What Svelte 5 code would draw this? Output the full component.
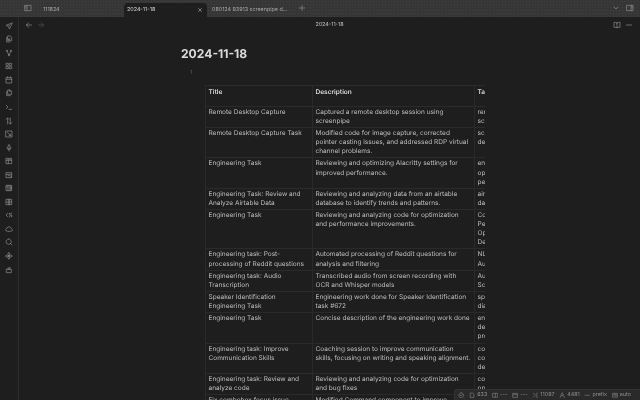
<script>
  // sidebar ribbon icons, top to bottom
  const ribbon = [
    "M21 3 3 10l7 3 3 7zM10 13l5-5",
    "M9 3h7l4 4v10H9zM5 7v14h10M14 11a2.500 2.500 0 1 0 1 2",
    "M6 4a2 2 0 1 0 .01 0M18 4a2 2 0 1 0 .01 0M12 17a2 2 0 1 0 .01 0M7 8l4 9M17 8l-4 9",
    "M4 4h6v6H4zM14 4h6v6h-6zM4 14h6v6H4zM14 14h6v6h-6z",
    "M4 5h16v16H4zM4 10h16M8 2v4M16 2v4",
    "M9 3h7l4 4v9H9zM5 8v12h11M13 3v4h4",
    "M4 7l5 5-5 5M12 19h8",
    "M8 3v18M4 7l4-4 4 4M16 21V3M12 17l4 4 4-4",
    "M3 3h18v18H3zM7 7l10 10M12 17h5v-5",
    "M12 3a3 3 0 0 1 3 3v6a3 3 0 0 1-6 0V6a3 3 0 0 1 3-3zM6 11a6 6 0 0 0 12 0M12 18v3",
    "M4 4h16v16H4zM4 10h16M10 10v10M8 7h8",
    "M4 5h16v15H4zM4 10h16M9 14h6M15 20l4-4",
    "M4 4h16v16H4zM9 4v16M15 4v16M4 9h5M15 9h5M15 14h5",
    "M4 4h16v16H4zM10 4v16M14 4v16M4 12h16",
    "M8 7l-5 5 5 5M20 6 13 18M14 7a1.500 1.500 0 1 0 .01 0M20 14a1.500 1.500 0 1 0 .01 0",
    "M7 19a5 5 0 0 1-1-9.900 7 7 0 0 1 13 2A4 4 0 0 1 18 19z",
    "M11 3a8 8 0 1 0 .01 0M21 21l-4.500-4.500",
    "M12 2l3 5-3 5-3-5zM12 12l3 5-3 5-3-5zM2 12l5-3 5 3-5 3zM12 12l5-3 5 3-5 3z",
    "M5 10h14v10H5zM9 10V6M15 10V4M12 10V5"
  ];

  const rows = [
    ["Remote Desktop Capture", "Captured a remote desktop session using screenpipe", ["remote", "screenpipe"]],
    ["Remote Desktop Capture Task", "Modified code for image capture, corrected pointer casting issues, and addressed RDP virtual channel problems.", ["screenpipe", "debugging"]],
    ["Engineering Task", "Reviewing and optimizing Alacritty settings for improved performance.", ["engineering", "optimization", "performance"]],
    ["Engineering Task: Review and Analyze Airtable Data", "Reviewing and analyzing data from an airtable database to identify trends and patterns.", ["airtable", "data"]],
    ["Engineering Task", "Reviewing and analyzing code for optimization and performance improvements.", ["Code", "Performance", "Optimization", "Debugging"]],
    ["Engineering task: Post-processing of Reddit questions", "Automated processing of Reddit questions for analysis and filtering", ["NLP", "Automation"]],
    ["Engineering task: Audio Transcription", "Transcribed audio from screen recording with OCR and Whisper models", ["Audio", "Screen"]],
    ["Speaker Identification Engineering Task", "Engineering work done for Speaker Identification task #672", ["speaker", "diarization"]],
    ["Engineering Task", "Concise description of the engineering work done", ["engineering", "development", "productivity"]],
    ["Engineering task: Improve Communication Skills", "Coaching session to improve communication skills, focusing on writing and speaking alignment.", ["coaching", "communication", "development"]],
    ["Engineering task: Review and analyze code", "Reviewing and analyzing code for optimization and bug fixes", ["code", "optimization"]],
    ["Fix combobox focus issue", "Modified Command component to improve", ["code", "ui"]]
  ];
</script>

<div class="app">
  <header class="titlebar">
    <svg class="icon toggle" viewBox="0 0 24 24"><path d="M3 4h18v16H3zM9 4v16M5 8h2M5 12h2" /></svg>
    <span class="tab first">111824</span>
    <div class="tab active">
      <span>2024-11-18</span>
      <svg class="close" viewBox="0 0 24 24"><path d="M5 5l14 14M19 5 5 19" /></svg>
    </div>
    <span class="tab third">080124 93913 screenpipe d...</span>
    <svg class="icon plus" viewBox="0 0 24 24"><path d="M12 4v16M4 12h16" /></svg>
    <div class="spacer"></div>
    <svg class="icon chevron" viewBox="0 0 24 24"><path d="M6 9l6 6 6-6" /></svg>
    <svg class="icon panel" viewBox="0 0 24 24"><path d="M3 4h18v16H3zM15 4v16M17 8h2M17 12h2" /></svg>
  </header>

  <div class="body">
    <nav class="ribbon">
      {#each ribbon as d}
        <svg class="icon" viewBox="0 0 24 24"><path {d} /></svg>
      {/each}
    </nav>

    <main class="pane">
      <div class="viewhead">
        <div class="nav">
          <svg class="icon back" viewBox="0 0 24 24"><path d="M20 12H4M11 5l-7 7 7 7" /></svg>
          <svg class="icon forward" viewBox="0 0 24 24"><path d="M4 12h16M13 5l7 7-7 7" /></svg>
        </div>
        <span class="viewtitle">2024-11-18</span>
        <div class="actions">
          <svg class="icon" viewBox="0 0 24 24"><path d="M12 6v14M12 6c-2-2-5-2-9-2v15c4 0 7 0 9 1 2-1 5-1 9-1V4c-4 0-7 0-9 2z" /></svg>
          <svg class="icon" viewBox="0 0 24 24"><path d="M4 12h16" /></svg>
        </div>
      </div>

      <div class="note">
        <h1>2024-11-18</h1>
        <div class="lineno">1</div>
        <div class="tablewrap">
          <table>
            <thead>
              <tr><th class="c1">Title</th><th class="c2">Description</th><th class="c3">Tags</th></tr>
            </thead>
            <tbody>
              {#each rows as [title, desc, tags]}
                <tr>
                  <td>{title}</td>
                  <td>{desc}</td>
                  <td>{#each tags as t}<div>{t}</div>{/each}</td>
                </tr>
              {/each}
            </tbody>
          </table>
        </div>
      </div>
    </main>
  </div>

  <footer class="status">
    <svg class="icon ok" viewBox="0 0 24 24"><path d="M12 3a9 9 0 1 0 .01 0M8 12l3 3 5-6" /></svg>
    <span class="item"><svg class="icon" viewBox="0 0 24 24"><path d="M6 4h8l4 4v12H6z" /></svg>633</span>
    <span class="item"><svg class="icon" viewBox="0 0 24 24"><path d="M3 5h18v14H3zM12 5v14" /></svg>---</span>
    <span class="item"><svg class="icon" viewBox="0 0 24 24"><path d="M4 5h16v15H4zM4 10h16" /></svg>---</span>
    <span class="item"><svg class="icon" viewBox="0 0 24 24"><path d="M5 5l5 5M5 19l5-5M15 12h5M15 7l5-3M15 17l5 3" /></svg>11097</span>
    <span class="item"><svg class="icon" viewBox="0 0 24 24"><path d="M12 4a4 4 0 1 0 .01 0M4 20a8 8 0 0 1 16 0" /></svg>4481</span>
    <span class="item"><svg class="icon" viewBox="0 0 24 24"><path d="M4 12h16" /></svg>prefix</span>
    <span class="item"><svg class="icon" viewBox="0 0 24 24"><path d="M3 5h18v14H3zM7 9h10M7 14h10" /></svg>auto</span>
  </footer>
</div>

<style>
  :global(body) {
    margin: 0;
    background: #1e1e1e;
  }

  .app {
    position: relative;
    width: 640px;
    height: 400px;
    overflow: hidden;
    background: #1e1e1e;
    color: #dadada;
    font-family: Inter, "Liberation Sans", sans-serif;
    text-rendering: geometricPrecision;
    display: flex;
    flex-direction: column;
    filter: blur(0.3px);
  }

  .icon {
    width: 8px;
    height: 8px;
    flex: none;
    fill: none;
    stroke: #8f8f8f;
    stroke-width: 2;
    stroke-linecap: round;
    stroke-linejoin: round;
  }

  .titlebar {
    height: 17px;
    flex: none;
    display: flex;
    align-items: flex-end;
    box-sizing: border-box;
    background-color: #363636;
    background-image: radial-gradient(#404040 0.5px, transparent 0.7px);
    background-size: 3px 3px;
    font-size: 5.400px;
    color: #a8a8a8;
  }

  .titlebar .icon {
    margin-bottom: 5px;
  }

  .toggle {
    margin-left: 24px;
  }

  .tab {
    height: 14px;
    line-height: 14px;
    white-space: nowrap;
  }

  .first {
    margin-left: 11px;
    width: 81px;
    box-sizing: border-box;
  }

  .active {
    width: 83px;
    box-sizing: border-box;
    padding: 0 4px 0 3px;
    display: flex;
    align-items: center;
    justify-content: space-between;
    background: #1e1e1e;
    border-radius: 4px 4px 0 0;
    color: #dadada;
  }

  .close {
    width: 6px;
    height: 6px;
    fill: none;
    stroke: #b0b0b0;
    stroke-width: 2.500;
  }

  .third {
    margin-left: 5px;
  }

  .titlebar .plus {
    margin-left: 11px;
  }

  .spacer {
    flex: 1;
  }

  .titlebar .chevron {
    margin-right: 6px;
  }

  .titlebar .panel {
    margin-right: 6px;
  }

  .body {
    flex: 1;
    min-height: 0;
    display: flex;
  }

  .ribbon {
    width: 19px;
    flex: none;
    box-sizing: border-box;
    padding-top: 4.700px;
    display: flex;
    flex-direction: column;
    align-items: center;
    gap: 5.550px;
    border-right: 1px solid #2c2c2c;
  }

  .pane {
    flex: 1;
    min-width: 0;
  }

  .viewhead {
    height: 15px;
    display: grid;
    grid-template-columns: 1fr auto 1fr;
    align-items: center;
    font-size: 5.400px;
    color: #c4c4c4;
  }

  .nav {
    display: flex;
    gap: 4px;
    padding-left: 6px;
  }

  .forward {
    stroke: #555;
  }

  .actions {
    display: flex;
    justify-content: flex-end;
    gap: 4px;
    padding-right: 7px;
  }

  .note {
    padding-left: 162px;
  }

  h1 {
    margin: 12.500px 0 0;
    font-size: 12.100px;
    line-height: 17px;
    font-weight: 700;
    color: #dadada;
  }

  .lineno {
    margin: 7px 0 0 9px;
    font-size: 5.400px;
    line-height: 8px;
    color: #5e5e5e;
  }

  .tablewrap {
    margin: 8px 0 0 24px;
    width: 280px;
    overflow: hidden;
  }

  table {
    width: 330px;
    table-layout: fixed;
    border-collapse: collapse;
    font-size: 6.520px;
    line-height: 9.050px;
  }

  th, td {
    border: 1px solid #2a2a2a;
    padding: 1.100px 2.500px;
    text-align: left;
    vertical-align: top;
    color: #bdbdbd;
    font-weight: 400;
  }

  th {
    height: 17.200px;
    color: #dadada;
    font-weight: 600;
    padding-top: 2px;
  }

  .c1 {
    width: 101px;
  }

  .c2 {
    width: 156px;
  }

  .status {
    position: absolute;
    right: 0;
    bottom: 0;
    width: 186px;
    height: 11.500px;
    box-sizing: border-box;
    padding: 0 9px 0 3px;
    display: flex;
    align-items: center;
    justify-content: space-between;
    background: #2a2a2a;
    border-top: 1px solid #333;
    border-left: 1px solid #333;
    border-radius: 3px 0 0 0;
    font-size: 5.400px;
    color: #8f8f8f;
  }

  .status .icon {
    width: 6.500px;
    height: 6.500px;
  }

  .item {
    display: flex;
    align-items: center;
    gap: 1.500px;
  }
</style>
